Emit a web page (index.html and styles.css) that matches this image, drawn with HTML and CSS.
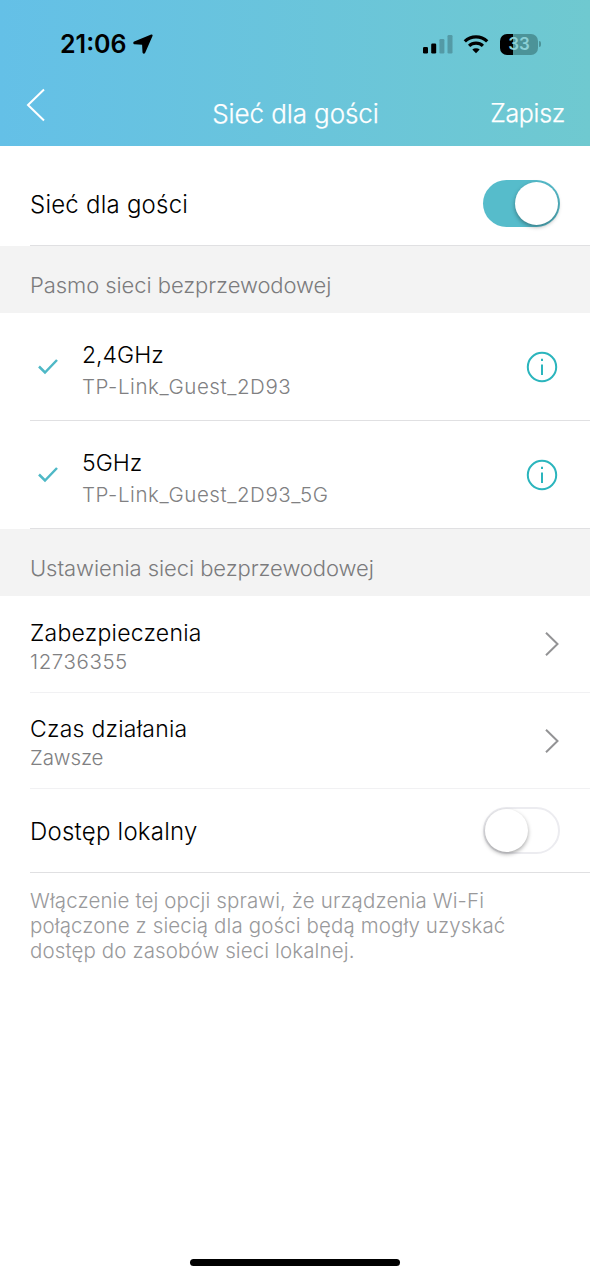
FILE: index.html
```html
<!DOCTYPE html>
<html lang="pl">
<head>
<meta charset="utf-8">
<title>Sieć dla gości</title>
<link rel="stylesheet" href="styles.css">
</head>
<body>
<div class="screen">
  <header class="header">
    <div class="status">
      <div class="status-left">
        <span class="clock">21:06</span>
        <svg class="location" viewBox="0 0 20 20"><path d="M18.200 .600 1.200 7.600C-.2 8.300 0 10.200 1.600 10.300l7.500.4.400 7.600c.1 1.600 2 1.800 2.700.4L19.500 2c.4-1-.3-1.800-1.300-1.400z"/></svg>
      </div>
      <div class="status-right">
        <svg class="signal" viewBox="0 0 30 19"><rect x="0" y="12" width="5" height="6.500" rx="1.200"/><rect x="8.200" y="8.500" width="5" height="10" rx="1.200"/><g opacity=".22"><rect x="16.400" y="4" width="5" height="14.500" rx="1.200"/><rect x="24.500" y="0" width="5" height="18.500" rx="1.200"/></g></svg>
        <svg class="wifi" viewBox="0 0 26 20"><g fill="none" stroke="#000" stroke-width="3.200"><path d="M1.800 7.400a16 16 0 0 1 22.400 0"/><path d="M6.100 11.900a9.900 9.900 0 0 1 13.800 0"/></g><path d="M13 19.300 9.300 15.600a5.400 5.400 0 0 1 7.400 0z"/></svg>
        <div class="battery">33</div>
        <span class="battery-cap"></span>
      </div>
    </div>
    <nav class="nav">
      <svg class="back" viewBox="0 0 20 34"><path d="M18 1.500 2 17l16 15.500"/></svg>
      <h1 class="title">Sieć dla gości</h1>
      <span class="save">Zapisz</span>
    </nav>
  </header>
  <main>
    <div class="row row-main">
      <span class="label">Sieć dla gości</span>
      <span class="switch switch-on"><span class="knob"></span></span>
    </div>
    <h2 class="section">Pasmo sieci bezprzewodowej</h2>
    <div class="row row-band">
      <svg class="check" viewBox="0 0 22 18"><path d="M2 8.500 8 14.500 20 2"/></svg>
      <div class="texts"><span class="name">2,4GHz</span><span class="sub">TP-Link_Guest_2D93</span></div>
      <svg class="info" viewBox="0 0 32 32"><circle cx="16" cy="16" r="14.200"/><path d="M16 13.500v10.500M16 7.800v2.100"/></svg>
    </div>
    <div class="row row-band">
      <svg class="check" viewBox="0 0 22 18"><path d="M2 8.500 8 14.500 20 2"/></svg>
      <div class="texts"><span class="name">5GHz</span><span class="sub">TP-Link_Guest_2D93_5G</span></div>
      <svg class="info" viewBox="0 0 32 32"><circle cx="16" cy="16" r="14.200"/><path d="M16 13.500v10.500M16 7.800v2.100"/></svg>
    </div>
    <h2 class="section section-settings">Ustawienia sieci bezprzewodowej</h2>
    <div class="row row-link row-first">
      <div class="texts"><span class="name">Zabezpieczenia</span><span class="sub">12736355</span></div>
      <svg class="arrow" viewBox="0 0 16 26"><path d="m2 1.800 11.500 11.200L2 24.200"/></svg>
    </div>
    <div class="row row-link">
      <div class="texts"><span class="name">Czas działania</span><span class="sub sub-time">Zawsze</span></div>
      <svg class="arrow" viewBox="0 0 16 26"><path d="m2 1.800 11.500 11.200L2 24.200"/></svg>
    </div>
    <div class="row row-local">
      <span class="label">Dostęp lokalny</span>
      <span class="switch"><span class="knob"></span></span>
    </div>
    <p class="note">Włączenie tej opcji sprawi, że urządzenia Wi-Fi<br>połączone z siecią dla gości będą mogły uzyskać<br>dostęp do zasobów sieci lokalnej.</p>
  </main>
  <div class="home"></div>
</div>
</body>
</html>
```
FILE: styles.css
```css
* { box-sizing: border-box; }
body { margin: 0; background: #fff; font-family: Inter, "Liberation Sans", sans-serif; font-weight: 300; color: #000; }
svg { display: block; flex: none; }
h1, h2, p { margin: 0; font-weight: inherit; }
.screen { width: 590px; height: 1278px; display: flex; flex-direction: column; overflow: hidden; }
main { flex: 1; }
.header { height: 146px; background: linear-gradient(90deg, #64c0e7, #6fc9d0); }
.status { height: 80px; padding: 8px 49px 0 60px; display: flex; justify-content: space-between; align-items: center; }
.status-left, .status-right { display: flex; align-items: center; }
.clock { font-size: 25px; font-weight: 600; line-height: 30px; }
.location { width: 20px; height: 20px; margin-left: 6px; }
.signal { width: 30px; height: 19px; }
.wifi { width: 26px; height: 20px; margin-left: 10px; }
.battery { width: 38px; height: 21px; margin-left: 11px; border-radius: 7px; background: linear-gradient(90deg, #000 33%, #4c9398 33%); color: #8bd0d6; font-size: 17px; font-weight: 600; line-height: 21px; text-align: center; }
.battery-cap { width: 2px; height: 6px; margin-left: 1px; border-radius: 0 2px 2px 0; background: #4c9398; }
.nav { height: 66px; padding: 0 25px 0 26px; display: grid; grid-template-columns: 1fr auto 1fr; color: #fff; line-height: 67px; font-weight: 400; }
.back { width: 20px; height: 34px; margin-top: 8px; fill: none; stroke: #fff; stroke-width: 2; }
.title { font-size: 26px; font-weight: 300; letter-spacing: -.1px; -webkit-text-stroke: .25px #fff; }
.save { font-size: 25px; font-weight: 300; letter-spacing: -.3px; text-align: right; -webkit-text-stroke: .25px #fff; }
.row { margin-left: 30px; padding-right: 30px; display: flex; align-items: center; justify-content: space-between; border-bottom: 1px solid #e0e0e2; }
.row-main { height: 100px; padding-top: 16px; }
.row-band { height: 108px; padding-right: 32px; }
.row-link { height: 96px; border-color: #f1f1f3; }
.row-first { height: 97px; }
.row-local { height: 84px; }
.label { padding-top: 2px; font-size: 24px; line-height: 30px; letter-spacing: .23px; }
.section { height: 67px; padding: 11px 30px 0; background: #f3f3f3; color: #7b7b7d; font-size: 22px; line-height: 56px; letter-spacing: -.07px; }
.texts { flex: 1; display: flex; flex-direction: column; align-items: flex-start; }
.name { font-size: 23px; line-height: 30px; }
.sub { font-size: 20.5px; line-height: 28px; letter-spacing: .57px; color: #808082; }
.sub-time { letter-spacing: -.1px; }
.row-band .texts { padding-top: 7px; }
.row-band .name { line-height: 33px; }
.row-band .sub { line-height: 30px; }
.row-link .texts { padding-top: 5px; }
.row-link .name { letter-spacing: .24px; }
.check { width: 22px; height: 18px; margin: 0 23px 0 7px; fill: none; stroke: #4eb8c6; stroke-width: 2.500; }
.info { width: 32px; height: 32px; fill: none; stroke: #2bb5bd; stroke-width: 2; }
.arrow { width: 16px; height: 26px; fill: none; stroke: #939395; stroke-width: 2; }
.switch { width: 77px; height: 47px; border-radius: 24px; border: 2px solid #ececf0; display: flex; }
.switch-on { padding: 2px; border: 0; background: #56bccb; justify-content: flex-end; }
.knob { width: 43px; height: 43px; border-radius: 50%; background: #fff; box-shadow: 0 2px 4px rgba(0,0,0,.35); }
.note { padding: 15px 30px 0; color: #99999b; font-size: 20.5px; line-height: 25px; letter-spacing: .12px; }
.home { width: 210px; height: 7px; margin: 0 auto 12px; border-radius: 4px; background: #000; }
```
